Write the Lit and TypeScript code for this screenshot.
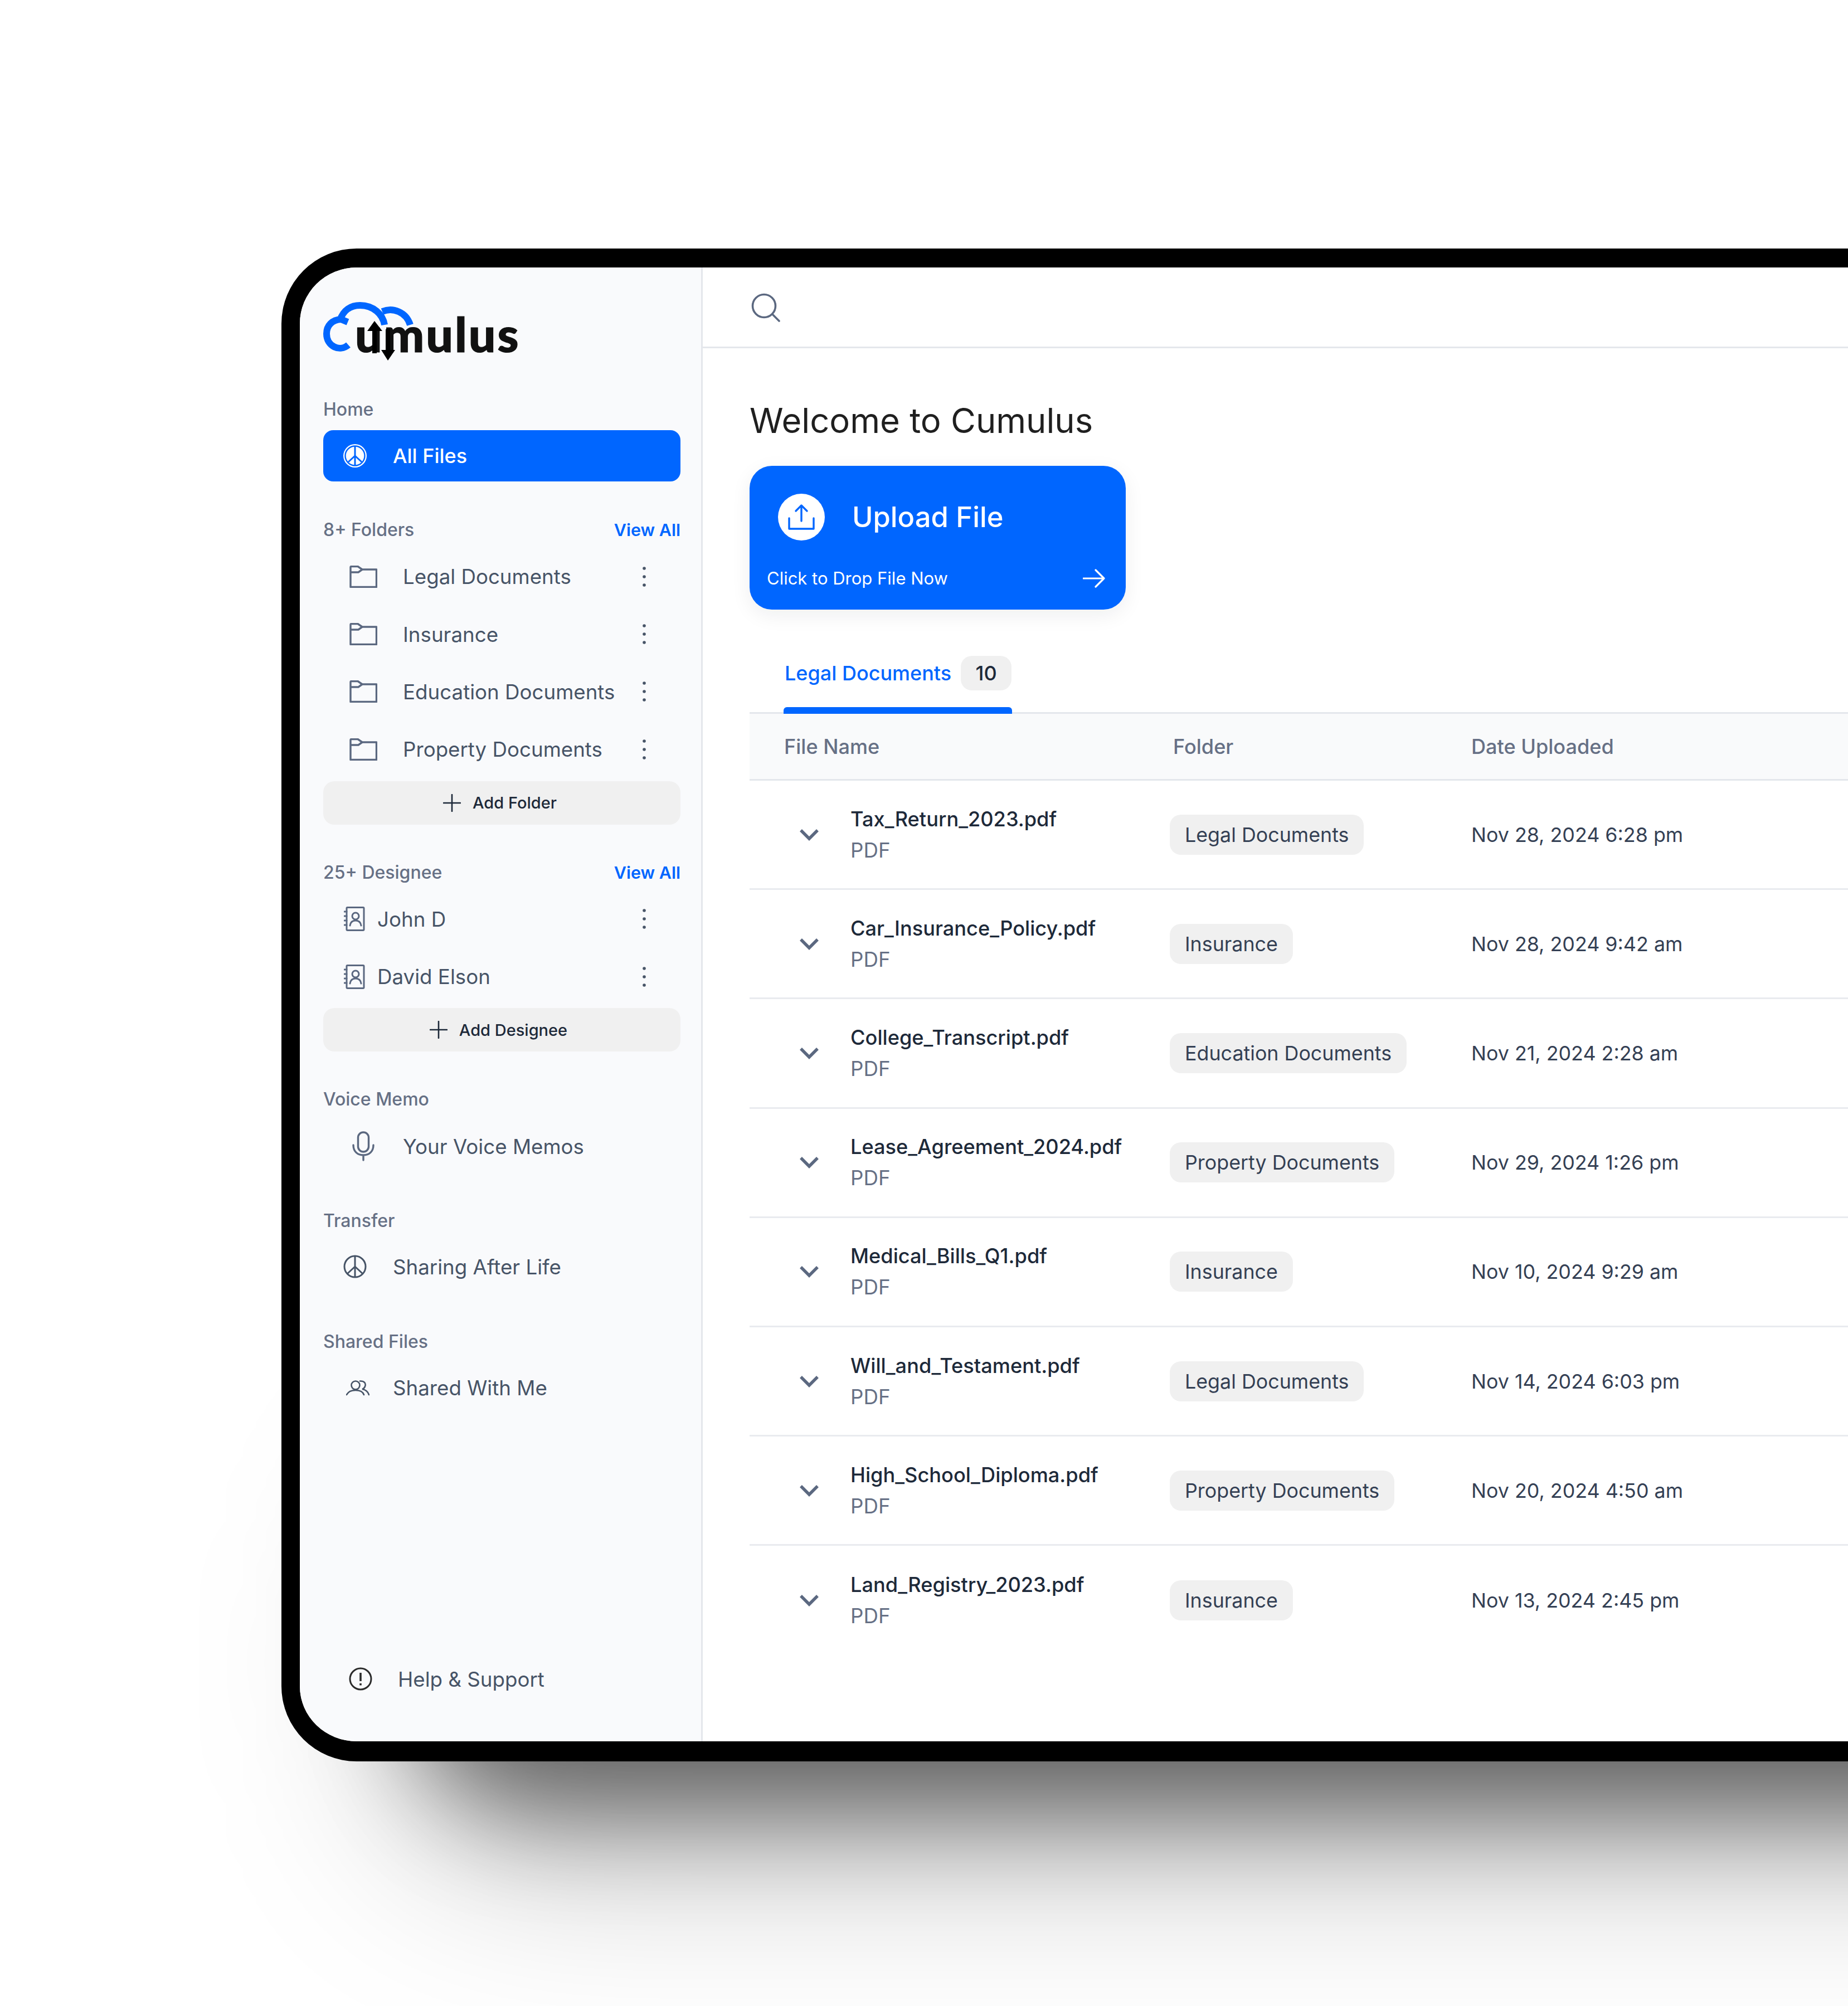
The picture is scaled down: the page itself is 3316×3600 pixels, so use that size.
import { LitElement, html, css, svg } from 'lit';
import { customElement } from 'lit/decorators.js';

// linhas da tabela
const FILES = [
  ['Tax_Return_2023.pdf', 'Legal Documents', 'Nov 28, 2024 6:28 pm'],
  ['Car_Insurance_Policy.pdf', 'Insurance', 'Nov 28, 2024 9:42 am'],
  ['College_Transcript.pdf', 'Education Documents', 'Nov 21, 2024 2:28 am'],
  ['Lease_Agreement_2024.pdf', 'Property Documents', 'Nov 29, 2024 1:26 pm'],
  ['Medical_Bills_Q1.pdf', 'Insurance', 'Nov 10, 2024 9:29 am'],
  ['Will_and_Testament.pdf', 'Legal Documents', 'Nov 14, 2024 6:03 pm'],
  ['High_School_Diploma.pdf', 'Property Documents', 'Nov 20, 2024 4:50 am'],
  ['Land_Registry_2023.pdf', 'Insurance', 'Nov 13, 2024 2:45 pm'],
];

const FOLDERS = ['Legal Documents', 'Insurance', 'Education Documents', 'Property Documents'];
const DESIGNEES = ['John D', 'David Elson'];

const folderIcon = svg`<svg class="icon" width="50" height="40" viewBox="0 0 50 40" fill="none" stroke="#5b6880" stroke-width="3.4" stroke-linejoin="round">
  <path d="M2 38.5V3a1.5 1.5 0 0 1 1.5-1.5H15L23 7H48.5V38.5H2Z"/><path d="M2 12H16L23 7"/></svg>`;

const contactIcon = svg`<svg class="icon" width="38" height="44" viewBox="0 0 38 44" fill="none" stroke="#5b6880" stroke-width="3" stroke-linecap="round">
  <rect x="5" y="1.5" width="31" height="41" rx="1.5"/>
  <path d="M1 9H5M1 17H5M1 25H5M1 33H5"/>
  <circle cx="21" cy="17" r="6"/><path d="M11 34C12 27 16 25 21 25S30 27 31 34"/></svg>`;

const dots = svg`<svg class="dots" width="8" height="36" viewBox="0 0 8 36" fill="#475467"><circle cx="4" cy="3" r="2.8"/><circle cx="4" cy="18" r="2.8"/><circle cx="4" cy="33" r="2.8"/></svg>`;

const plus = svg`<svg width="32" height="32" viewBox="0 0 32 32" stroke="#1d2939" stroke-width="2.6" stroke-linecap="round"><path d="M16 1V31M1 16H31"/></svg>`;

const peace = (color: string) => svg`<svg class="icon" width="42" height="42" viewBox="0 0 42 42" fill="none" stroke="${color}" stroke-width="3">
  <circle cx="21" cy="21" r="19"/><path d="M21 2V40M21 21L7 34M21 21L35 34"/></svg>`;

const peaceActive = svg`<svg class="icon" width="42" height="44" viewBox="0 0 42 44" fill="none">
  <circle cx="21" cy="22" r="21" fill="#fff"/><circle cx="21" cy="22" r="17.5" stroke="#06f" stroke-width="2.4"/>
  <path d="M21 5V39M21 22L9 33M21 22L33 33" stroke="#06f" stroke-width="3"/></svg>`;

@customElement('app-root')
export class AppRoot extends LitElement {
  static styles = css`
    :host {
      display: block;
      width: 3316px;
      height: 3600px;
      overflow: hidden;
      background: #fff;
      font-family: Inter, 'Noto Sans', sans-serif;
      font-size: 36.7px;
      color: #475467;
      padding: 446px 0 0 505px;
      box-sizing: border-box;
    }
    * { box-sizing: border-box; }
    .frame {
      position: relative;
      width: 3200px;
      height: 2715px;
      isolation: isolate;
    }
    /* sombra projetada por baixo da moldura: uma camada densa e outra larga */
    .frame::before,
    .frame::after {
      content: '';
      position: absolute;
      z-index: -1;
      top: 2200px;
      right: -500px;
      border-radius: 220px;
    }
    .frame::before {
      left: 230px;
      bottom: -89px;
      background: rgba(0, 0, 0, 0.48);
      filter: blur(90px);
    }
    .frame::after {
      left: 220px;
      bottom: -160px;
      background: rgba(0, 0, 0, 0.28);
      filter: blur(170px);
    }
    .screen {
      position: relative;
      display: flex;
      width: 100%;
      height: 100%;
      background: #fff;
      border: solid #000;
      border-width: 34px 34px 36px 33px;
      border-radius: 135px;
      overflow: hidden;
      background-clip: padding-box;
    }
    .sidebar {
      width: 723px;
      flex: none;
      display: flex;
      flex-direction: column;
      background: #f9fafc;
      border-right: 3px solid #e4e7ec;
      padding: 62px 37px 60px 42px;
    }
    .logo {
      position: relative;
      height: 105px;
      padding: 15px 0 0 57px;
      font-family: Lato, sans-serif;
      font-weight: 900;
      font-size: 86px;
      line-height: 84px;
      letter-spacing: 3px;
      color: #111;
      -webkit-text-stroke: 1.2px #111;
    }
    .logo svg { position: absolute; left: 0; top: 0; }
    .label {
      height: 40px;
      line-height: 40px;
      font-size: 32px;
      font-weight: 500;
      color: #667085;
      display: flex;
      justify-content: space-between;
    }
    .label a { color: #06f; font-weight: 600; font-size: 30.5px; }
    .home { margin-top: 68px; }
    .folders { margin-top: 67px; }
    .designee { margin-top: 66px; }
    .voice { margin-top: 66px; }
    .transfer { margin-top: 62px; }
    .shared { margin-top: 63px; }
    .list-folders, .list-designee, .row-voice { margin-top: 12px; }
    .row-transfer, .row-shared { margin-top: 11px; }
    .row {
      height: 103.4px;
      display: flex;
      align-items: center;
      white-space: nowrap;
    }
    .icon { flex: none; }
    .dots { margin-left: auto; margin-right: 61px; flex: none; }
    .row.folder { padding-left: 47px; gap: 46px; }
    .row.contact { padding-left: 37px; gap: 22px; }
    .row.wide { padding-left: 36px; gap: 47px; }
    .row.people { padding-left: 41px; gap: 42px; }
    .row.help { padding-left: 46px; gap: 46px; margin-top: auto; }
    .active {
      margin-top: 17px;
      height: 92px;
      background: #06f;
      color: #fff;
      border-radius: 18px;
      font-weight: 500;
      font-size: 36px;
    }
    .add {
      height: 78px;
      margin-top: 5px;
      background: #f0f0f0;
      border-radius: 20px;
      display: flex;
      align-items: center;
      justify-content: center;
      gap: 21px;
      font-size: 29px;
      font-weight: 500;
      color: #1d2939;
      padding-right: 7px;
    }
    .add.designee-add { padding-right: 12px; }
    .main { flex: 1; min-width: 0; }
    .topbar {
      height: 145px;
      border-bottom: 3px solid #e4e7ec;
      padding: 46px 0 0 87px;
    }
    .content { padding-left: 84px; }
    h1 {
      margin: 90px 0 0;
      font-size: 61.5px;
      line-height: 80px;
      font-weight: 400;
      color: #1f1f1f;
    }
    .upload {
      margin-top: 41px;
      width: 675px;
      height: 258px;
      border-radius: 40px;
      background: #06f;
      color: #fff;
      box-shadow: 0 10px 36px rgba(16, 24, 40, 0.07);
      padding: 50px 37px 0 31px;
    }
    .upload-top {
      display: flex;
      align-items: center;
      gap: 49px;
      padding-left: 20px;
      font-size: 50.7px;
      font-weight: 500;
      line-height: 84px;
    }
    .circle {
      width: 84px;
      height: 84px;
      border-radius: 50%;
      background: #fff;
      display: flex;
      align-items: center;
      justify-content: center;
    }
    .upload-bottom {
      margin-top: 48px;
      display: flex;
      justify-content: space-between;
      align-items: center;
      font-size: 31px;
      line-height: 40px;
    }
    .tab {
      margin: 83px 0 0 61px;
      width: 410px;
      height: 104px;
      display: flex;
      flex-direction: column;
      justify-content: space-between;
      position: relative;
      z-index: 1;
    }
    .tab-label {
      display: flex;
      gap: 17px;
      color: #06f;
      font-weight: 500;
      font-size: 36px;
      white-space: nowrap;
    }
    .tab-label span { line-height: 62px; padding-left: 2px; }
    .tab-label b {
      width: 91px;
      height: 62px;
      line-height: 62px;
      text-align: center;
      background: #f0f0f0;
      border-radius: 20px;
      color: #1d2939;
      font-weight: 500;
    }
    .tab-line {
      height: 12px;
      background: #06f;
      border-radius: 6px 6px 0 0;
    }
    .grid {
      display: grid;
      grid-template-columns: 754px 541px 1fr;
      align-items: center;
    }
    .head {
      height: 123px;
      margin-top: -3px;
      background: #f9fafb;
      border-top: 3px solid #e4e7ec;
      border-bottom: 3px solid #e4e7ec;
      color: #667085;
      font-weight: 500;
      font-size: 36.1px;
    }
    .head div:first-child { padding-left: 62px; }
    .head div:nth-child(2) { padding-left: 6px; }
    .file {
      height: 196.2px;
      border-bottom: 3px solid #e9ebef;
    }
    .file:last-child { border-bottom: 0; }
    .name {
      display: flex;
      align-items: center;
      padding-left: 89px;
      gap: 56px;
    }
    .name svg { flex: none; }
    .fname { color: #1d2939; font-weight: 500; font-size: 36.2px; line-height: 56px; }
    .ftype { color: #667085; line-height: 56px; }
    .chip {
      display: inline-block;
      height: 72px;
      line-height: 72px;
      padding: 0 27px;
      background: #f0f0f0;
      border-radius: 20px;
      color: #344054;
      font-size: 35.8px;
    }
    .date { color: #344054; font-size: 35.8px; }
  `;

  private renderFile(f: string[]) {
    return html`<div class="grid file">
      <div class="name">
        <svg width="36" height="22" viewBox="0 0 36 22" fill="none" stroke="#5b6880" stroke-width="5.5"><path d="M3 3L18 18L33 3"/></svg>
        <div>
          <div class="fname">${f[0]}</div>
          <div class="ftype">PDF</div>
        </div>
      </div>
      <div><span class="chip">${f[1]}</span></div>
      <div class="date">${f[2]}</div>
    </div>`;
  }

  render() {
    return html`
      <div class="frame">
        <div class="screen">
          <aside class="sidebar">
            <div class="logo">
              umulus
              <svg width="170" height="106" viewBox="0 0 170 106" fill="none">
                <path d="M45 77C30 90 6 80 6 57C6 42 16 32 32 31L44 36" stroke="#06f" stroke-width="12"/>
                <path d="M30 33C36 14 50 6 66 6C90 6 107 22 110 41" stroke="#06f" stroke-width="12"/>
                <path d="M106 17C125 9 149 18 156 41" stroke="#06f" stroke-width="12"/>
                <path d="M92 34L106 52H96V92H88V52H79Z" fill="#000"/>
                <path d="M112 49H120V86H129L116 105L104 86H112Z" fill="#000"/>
              </svg>
            </div>

            <div class="label home">Home</div>
            <div class="row wide active">${peaceActive}All Files</div>

            <div class="label folders">8+ Folders<a>View All</a></div>
            <div class="list-folders">
              ${FOLDERS.map((f) => html`<div class="row folder">${folderIcon}${f}${dots}</div>`)}
            </div>
            <div class="add">${plus}Add Folder</div>

            <div class="label designee">25+ Designee<a>View All</a></div>
            <div class="list-designee">
              ${DESIGNEES.map((d) => html`<div class="row contact">${contactIcon}${d}${dots}</div>`)}
            </div>
            <div class="add designee-add">${plus}Add Designee</div>

            <div class="label voice">Voice Memo</div>
            <div class="row folder row-voice">
              <svg class="icon" width="50" height="54" viewBox="0 0 50 54" fill="none" stroke="#5b6880" stroke-width="3.4" stroke-linecap="round">
                <rect x="15.5" y="2" width="19" height="35" rx="9.5"/>
                <path d="M7 25C7 36 14 43 25 43S43 36 43 25M25 43V52"/>
              </svg>
              Your Voice Memos
            </div>

            <div class="label transfer">Transfer</div>
            <div class="row wide row-transfer">${peace('#475467')}Sharing After Life</div>

            <div class="label shared">Shared Files</div>
            <div class="row people row-shared">
              <svg class="icon" width="42" height="28" viewBox="0 0 42 28" fill="none" stroke="#475467" stroke-width="2.6" stroke-linecap="round">
                <circle cx="17" cy="9" r="7.5"/>
                <path d="M1 26C4 20 10 18 17 18S30 20 32 26M25 1.5C33 1 36 6 34 11C33 14 31 15.5 29 16C35 17 39 20 41 26"/>
              </svg>
              Shared With Me
            </div>

            <div class="row help">
              <svg class="icon" width="42" height="42" viewBox="0 0 42 42" fill="none" stroke="#2b2b2b" stroke-width="3">
                <circle cx="21" cy="21" r="19"/><path d="M21 10V25M21 29V32.5" stroke-width="3.6"/>
              </svg>
              Help &amp; Support
            </div>
          </aside>

          <main class="main">
            <div class="topbar">
              <svg width="52" height="52" viewBox="0 0 52 52" fill="none" stroke="#5b6880" stroke-width="3.6" stroke-linecap="round">
                <circle cx="23" cy="23" r="20.5"/><path d="M38 38L50 50"/>
              </svg>
            </div>
            <div class="content">
              <h1>Welcome to Cumulus</h1>
              <div class="upload">
                <div class="upload-top">
                  <div class="circle">
                    <svg width="48" height="48" viewBox="0 0 48 48" fill="none" stroke="#06f" stroke-width="3.4" stroke-linecap="round" stroke-linejoin="round">
                      <path d="M24 3V31M14 13L24 3L34 13M2 26V45H46V26"/>
                    </svg>
                  </div>
                  Upload File
                </div>
                <div class="upload-bottom">
                  Click to Drop File Now
                  <svg width="40" height="34" viewBox="0 0 40 34" fill="none" stroke="#fff" stroke-width="3.2" stroke-linecap="round" stroke-linejoin="round">
                    <path d="M1 17H38M23 2L38 17L23 32"/>
                  </svg>
                </div>
              </div>

              <div class="tab">
                <div class="tab-label"><span>Legal Documents</span><b>10</b></div>
                <div class="tab-line"></div>
              </div>
              <div class="grid head"><div>File Name</div><div>Folder</div><div>Date Uploaded</div></div>
              ${FILES.map((f) => this.renderFile(f))}
            </div>
          </main>
        </div>
      </div>
    `;
  }
}
